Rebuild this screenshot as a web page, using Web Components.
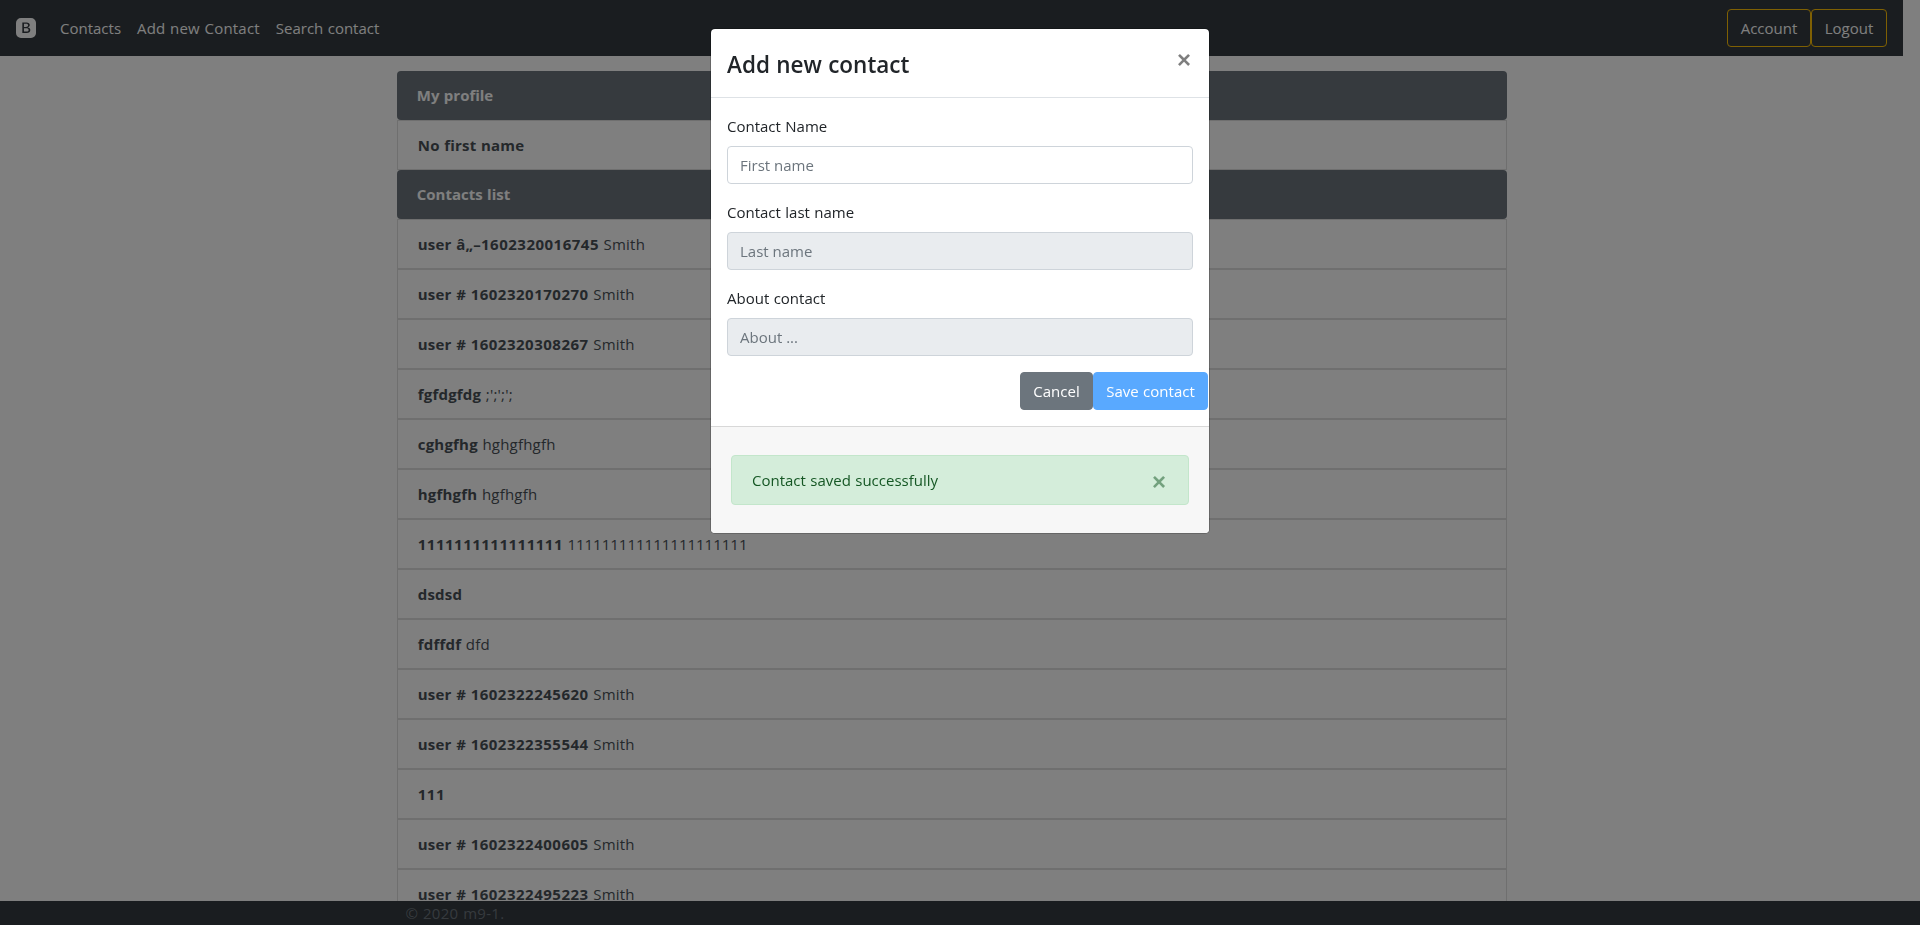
<!DOCTYPE html>
<html lang="en">
<head>
<meta charset="utf-8">
<title>Contacts</title>
<style>
    html, body { margin: 0; height: 100%; overflow: hidden; }
    body { font: 15px/24px "Open Sans", "Liberation Sans", sans-serif; word-spacing: .5px; color: #212529; background: #fff; }
</style>
</head>
<body>
<contacts-app>
    <nav-bar slot="nav">
        <nav-link>Contacts</nav-link>
        <nav-link wide>Add new Contact</nav-link>
        <nav-link>Search contact</nav-link>
        <outline-button slot="actions" largura="84">Account</outline-button>
        <outline-button slot="actions" largura="76">Logout</outline-button>
    </nav-bar>

    <info-card>My profile</info-card>
    <contact-row name="No first name"></contact-row>
    <info-card>Contacts list</info-card>
    <contact-row name="user â„–1602320016745">Smith</contact-row>
    <contact-row name="user # 1602320170270">Smith</contact-row>
    <contact-row name="user # 1602320308267">Smith</contact-row>
    <contact-row name="fgfdgfdg">;';';';</contact-row>
    <contact-row name="cghgfhg">hghgfhgfh</contact-row>
    <contact-row name="hgfhgfh">hgfhgfh</contact-row>
    <contact-row name="1111111111111111" digits>111111111111111111111</contact-row>
    <contact-row name="dsdsd"></contact-row>
    <contact-row name="fdffdf">dfd</contact-row>
    <contact-row name="user # 1602322245620">Smith</contact-row>
    <contact-row name="user # 1602322355544">Smith</contact-row>
    <contact-row name="111"></contact-row>
    <contact-row name="user # 1602322400605">Smith</contact-row>
    <contact-row name="user # 1602322495223">Smith</contact-row>

    <page-footer slot="footer">© 2020 m9-1.</page-footer>
</contacts-app>

<contact-modal heading="Add new contact">
    <form-field label="Contact Name" placeholder="First name"></form-field>
    <form-field label="Contact last name" placeholder="Last name" disabled></form-field>
    <form-field label="About contact" placeholder="About ..." disabled></form-field>
    <modal-button slot="actions" kind="cancel">Cancel</modal-button>
    <modal-button slot="actions" kind="save">Save contact</modal-button>
    <success-alert slot="footer">Contact saved successfully</success-alert>
</contact-modal>

<script>
class BaseElement extends HTMLElement {
    connectedCallback() {
        if (this.shadowRoot) return;
        this.attachShadow({mode: "open"});
        this.shadowRoot.innerHTML = this.markup();
    }
}

class ContactsApp extends BaseElement {
    markup() {
        return `
            <style>
                :host { display: grid; grid-template-rows: auto 1fr auto; height: 925px; overflow: hidden; }
                main { padding: 15px 17px 0 0; overflow: hidden; min-height: 0; }
                .container { width: 1110px; margin: 0 auto; padding-left: .5px; }
            </style>
            <slot name="nav"></slot>
            <main><div class="container"><slot></slot></div></main>
            <slot name="footer"></slot>
        `;
    }
}

class NavBar extends BaseElement {
    markup() {
        return `
            <style>
                :host { display: block; margin-right: 17px; background: #343a40; }
                nav { display: flex; align-items: center; height: 56px; padding: 0 16px; box-sizing: border-box; }
                svg { width: 20px; height: 20px; margin-right: 24px; fill: #fff; display: block; }
                .links { display: flex; gap: 16px; flex: 1; }
                .actions { display: flex; }
            </style>
            <nav>
                <svg viewBox="0 0 16 16">
                    <path d="M6.375 7.125V4.658h1.78c.973 0 1.542.457 1.542 1.237 0 .802-.604 1.23-1.764 1.23H6.375zm0 3.762h1.898c1.184 0 1.81-.48 1.81-1.377 0-.885-.65-1.348-1.886-1.348H6.375v2.725z"/>
                    <path fill-rule="evenodd" d="M4.002 0a4 4 0 0 0-4 4v8a4 4 0 0 0 4 4h8a4 4 0 0 0 4-4V4a4 4 0 0 0-4-4h-8zm1.06 12V3.545h3.399c1.587 0 2.543.809 2.543 2.11 0 .884-.65 1.675-1.483 1.816v.1c1.143.117 1.927.931 1.927 2.04 0 1.488-1.085 2.389-2.831 2.389H5.062z"/>
                </svg>
                <div class="links"><slot></slot></div>
                <div class="actions"><slot name="actions"></slot></div>
            </nav>
        `;
    }
}

class NavLink extends BaseElement {
    markup() {
        return `
            <style>
                :host { display: block; color: #fff; white-space: nowrap; }
                :host([wide]) { letter-spacing: .2px; }
            </style>
            <slot></slot>
        `;
    }
}

class OutlineButton extends BaseElement {
    markup() {
        return `
            <style>
                :host { display: block; box-sizing: border-box; width: ${this.getAttribute("largura")}px; height: 38px; padding: 6px 0;
                        text-align: center; color: #fff; border: 1px solid #ffc107; border-radius: 4px; white-space: nowrap; }
            </style>
            <slot></slot>
        `;
    }
}

class InfoCard extends BaseElement {
    markup() {
        return `
            <style>
                :host { display: block; box-sizing: border-box; height: 49px; padding: 12px 20px; font-weight: 700;
                        color: #fff; background: #6c757d; border-radius: 4px; }
            </style>
            <slot></slot>
        `;
    }
}

class ContactRow extends BaseElement {
    markup() {
        const nome = this.getAttribute("name").replace(/\d+/g, "<i>$&</i>");
        return `
            <style>
                :host { display: block; box-sizing: border-box; height: 50px; padding: 12px 20px; white-space: nowrap; color: #495057;
                        letter-spacing: .2px; border: 1px solid rgba(0,0,0,.125); background: #fff; }
                :host([digits]) { letter-spacing: 0; }
                b { font-weight: 700; }
                i { font-style: normal; letter-spacing: .5px; }
            </style>
            <b>${nome}</b> <slot></slot>
        `;
    }
}

class PageFooter extends BaseElement {
    markup() {
        return `
            <style>
                :host { display: block; height: 24px; background: #343a40; color: #6c757d; letter-spacing: .3px; }
                div { width: 1110px; margin: 0 auto; padding-left: 1px; }
            </style>
            <div><slot></slot></div>
        `;
    }
}

class ContactModal extends BaseElement {
    markup() {
        return `
            <style>
                :host { position: fixed; inset: 0; display: block; background: rgba(0,0,0,.5); }
                .dialog { box-sizing: border-box; width: 500px; margin: 28px auto 0; background: #fff;
                          border: 1px solid rgba(0,0,0,.2); border-radius: 5px; background-clip: padding-box; overflow: hidden; }
                header { display: flex; justify-content: space-between; padding: 16px; border-bottom: 1px solid #dee2e6; }
                h4 { margin: 0; padding-top: 3px; font-size: 22.5px; line-height: 33px; font-weight: 600; }
                .close { font: 700 24px/24px "Liberation Sans", sans-serif; color: #000; opacity: .5; margin: 3px 2px 0 0; }
                .body { padding: 16px 16px 16px; }
                .actions { display: flex; justify-content: flex-end; margin-right: -15px; }
                footer { padding: 28px 20px; background: #f7f7f7; border-top: 1px solid rgba(0,0,0,.125); }
            </style>
            <div class="dialog">
                <header><h4>${this.getAttribute("heading")}</h4><span class="close">×</span></header>
                <div class="body">
                    <slot></slot>
                    <div class="actions"><slot name="actions"></slot></div>
                </div>
                <footer><slot name="footer"></slot></footer>
            </div>
        `;
    }
}

class FormField extends BaseElement {
    markup() {
        const desativado = this.hasAttribute("disabled") ? "disabled" : "";
        return `
            <style>
                :host { display: block; margin-bottom: 16px; }
                label { display: block; margin-bottom: 8px; }
                input { display: block; box-sizing: border-box; width: 100%; height: 38px; padding: 6px 12px; font: inherit;
                        color: #495057; background: #fff; border: 1px solid #ced4da; border-radius: 4px; outline: 0; }
                input:disabled { background: #e9ecef; }
                input::placeholder { color: #6c757d; opacity: 1; }
            </style>
            <label>${this.getAttribute("label")}</label>
            <input type="text" placeholder="${this.getAttribute("placeholder")}" ${desativado}>
        `;
    }
}

class ModalButton extends BaseElement {
    markup() {
        const salvar = this.getAttribute("kind") === "save";
        const fundo = salvar ? "#59a9ff" : "#6c757d";
        return `
            <style>
                :host { display: block; box-sizing: border-box; width: ${salvar ? 115 : 73}px; height: 38px; padding: 6px 0; text-align: center;
                        color: #fff; white-space: nowrap; background: ${fundo}; border: 1px solid ${fundo}; border-radius: 4px; }
            </style>
            <slot></slot>
        `;
    }
}

class SuccessAlert extends BaseElement {
    markup() {
        return `
            <style>
                :host { display: flex; justify-content: space-between; box-sizing: border-box; height: 50px; padding: 12px 22px 12px 20px;
                        color: #155724; background: #d4edda; border: 1px solid #c3e6cb; border-radius: 4px; }
                span { font: 700 24px/24px "Liberation Sans", sans-serif; opacity: .5; margin-top: 2px; }
            </style>
            <div><slot></slot></div>
            <span>×</span>
        `;
    }
}

customElements.define("contacts-app", ContactsApp);
customElements.define("nav-bar", NavBar);
customElements.define("nav-link", NavLink);
customElements.define("outline-button", OutlineButton);
customElements.define("info-card", InfoCard);
customElements.define("contact-row", ContactRow);
customElements.define("page-footer", PageFooter);
customElements.define("contact-modal", ContactModal);
customElements.define("form-field", FormField);
customElements.define("modal-button", ModalButton);
customElements.define("success-alert", SuccessAlert);
</script>
</body>
</html>
